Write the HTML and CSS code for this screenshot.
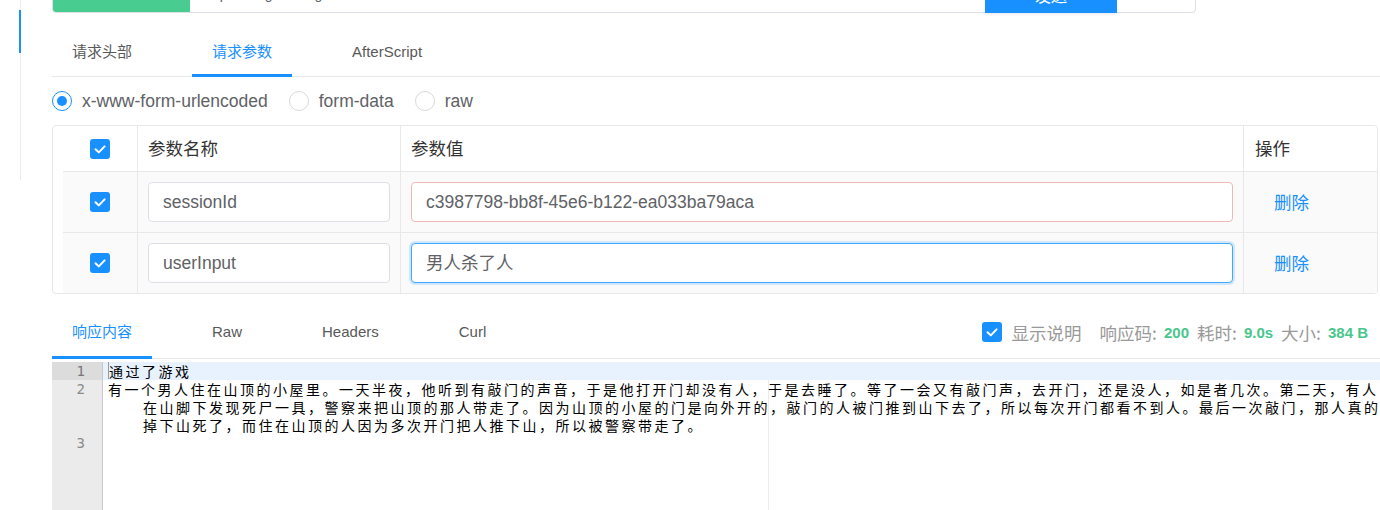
FILE: index.html
```html
<!DOCTYPE html>
<html lang="zh-CN">
<head>
<meta charset="utf-8">
<title>接口调试</title>
<link rel="stylesheet" href="styles.css">
</head>
<body>
<div class="page">
  <aside class="side">
    <div class="side-line"><div class="side-active"></div></div>
  </aside>
  <main class="main">
    <div class="urlbar">
      <div class="method"></div>
      <div class="url">/api/chat/game/log</div>
      <button class="send">发送</button>
      <div class="urlbar-rest"></div>
    </div>

    <div class="tabs req-tabs">
      <div class="tab">请求头部</div>
      <div class="tab active">请求参数</div>
      <div class="tab">AfterScript</div>
    </div>

    <div class="radios">
      <label class="radio checked"><span class="radio-dot"></span><span>x-www-form-urlencoded</span></label>
      <label class="radio"><span class="radio-dot"></span><span>form-data</span></label>
      <label class="radio"><span class="radio-dot"></span><span>raw</span></label>
    </div>

    <div class="params">
      <div class="prow phead">
        <div class="cell ccheck"><span class="cb"><svg viewBox="0 0 20 20" width="20" height="20"><path d="M5.5 10.2 L8.8 13.4 L14.6 7.4" fill="none" stroke="#fff" stroke-width="2" stroke-linecap="round" stroke-linejoin="round"/></svg></span></div>
        <div class="cell hcell">参数名称</div>
        <div class="cell hcell">参数值</div>
        <div class="cell hcell cop-h">操作</div>
      </div>
      <div class="prow pbody">
        <div class="cell ccheck"><span class="cb"><svg viewBox="0 0 20 20" width="20" height="20"><path d="M5.5 10.2 L8.8 13.4 L14.6 7.4" fill="none" stroke="#fff" stroke-width="2" stroke-linecap="round" stroke-linejoin="round"/></svg></span></div>
        <div class="cell"><div class="inp">sessionId</div></div>
        <div class="cell"><div class="inp inp-err">c3987798-bb8f-45e6-b122-ea033ba79aca</div></div>
        <div class="cell cop"><span class="link">删除</span></div>
      </div>
      <div class="prow pbody last">
        <div class="cell ccheck"><span class="cb"><svg viewBox="0 0 20 20" width="20" height="20"><path d="M5.5 10.2 L8.8 13.4 L14.6 7.4" fill="none" stroke="#fff" stroke-width="2" stroke-linecap="round" stroke-linejoin="round"/></svg></span></div>
        <div class="cell"><div class="inp">userInput</div></div>
        <div class="cell"><div class="inp inp-focus">男人杀了人</div></div>
        <div class="cell cop"><span class="link">删除</span></div>
      </div>
    </div>

    <div class="resp-head">
      <div class="tabs resp-tabs">
        <div class="tab active">响应内容</div>
        <div class="tab">Raw</div>
        <div class="tab">Headers</div>
        <div class="tab">Curl</div>
      </div>
      <div class="stats">
        <span class="cb"><svg viewBox="0 0 20 20" width="20" height="20"><path d="M5.5 10.2 L8.8 13.4 L14.6 7.4" fill="none" stroke="#fff" stroke-width="2" stroke-linecap="round" stroke-linejoin="round"/></svg></span>
        <span class="show-desc">显示说明</span>
        <span class="stat-label">响应码:</span><span class="stat-val">200</span>
        <span class="stat-label">耗时:</span><span class="stat-val">9.0s</span>
        <span class="stat-label">大小:</span><span class="stat-val">384 B</span>
      </div>
    </div>

    <div class="editor">
      <div class="gutter">
        <div class="gl active">1</div>
        <div class="gl">2</div>
        <div class="gl"></div>
        <div class="gl"></div>
        <div class="gl">3</div>
      </div>
      <div class="code">
        <div class="line active"><span class="cursor"></span>通过了游戏</div>
        <div class="line">有一个男人住在山顶的小屋里。一天半夜，他听到有敲门的声音，于是他打开门却没有人，于是去睡了。等了一会又有敲门声，去开门，还是没人，如是者几次。第二天，有人</div>
        <div class="line wrap">在山脚下发现死尸一具，警察来把山顶的那人带走了。因为山顶的小屋的门是向外开的，敲门的人被门推到山下去了，所以每次开门都看不到人。最后一次敲门，那人真的</div>
        <div class="line wrap">掉下山死了，而住在山顶的人因为多次开门把人推下山，所以被警察带走了。</div>
        <div class="line"></div>
      </div>
    </div>
  </main>
</div>
</body>
</html>
```

FILE: styles.css
```css
html, body {
  margin: 0;
  padding: 0;
  background: #fff;
}
body {
  width: 1380px;
  height: 510px;
  overflow: hidden;
  font-family: "Liberation Sans", "Noto Sans CJK SC", sans-serif;
}
.page {
  display: flex;
  align-items: flex-start;
}
.side {
  width: 52px;
  flex-shrink: 0;
  padding-left: 20px;
  box-sizing: border-box;
}
.side-line {
  width: 1px;
  height: 180px;
  background: #ececec;
}
.side-active {
  width: 2px;
  height: 43px;
  margin-left: -1px;
  position: relative;
  top: 10px;
  background: #1890ff;
}
.main {
  width: 1328px;
  flex-shrink: 0;
}

/* url bar */
.urlbar {
  margin-top: -24px;
  width: 1144px;
  height: 37px;
  box-sizing: border-box;
  border: 1px solid #dcdfe6;
  border-radius: 4px;
  display: flex;
}
.method {
  width: 137px;
  background: #49cc90;
  border-radius: 3px 0 0 3px;
}
.url {
  flex: 1;
  padding-left: 18px;
  font-size: 14px;
  line-height: 35px;
  color: #606266;
}
.send {
  width: 132px;
  height: 36px;
  margin-bottom: -1px;
  border: none;
  background: #1890ff;
  color: #fff;
  font-family: "Noto Sans CJK SC", sans-serif;
  font-size: 16px;
  line-height: 35px;
  padding: 0;
  box-shadow: 0 2px 2px rgba(0, 0, 0, 0.06);
}
.urlbar-rest {
  width: 78px;
}

/* tabs */
.tabs {
  display: flex;
}
.req-tabs {
  margin-top: 15px;
  height: 48px;
  border-bottom: 1px solid #e8e8e8;
}
.tab {
  padding: 0 20px;
  margin-right: 40px;
  height: 49px;
  margin-bottom: -1px;
  box-sizing: border-box;
  border-bottom: 3px solid transparent;
  line-height: 48px;
  font-size: 15px;
  color: #595959;
  white-space: nowrap;
}
.tab.active {
  color: #1890ff;
  border-bottom-color: #1890ff;
}

/* radios */
.radios {
  height: 48px;
  display: flex;
  align-items: center;
}
.radio {
  display: flex;
  align-items: center;
  gap: 10px;
  margin-right: 21px;
  font-size: 17.5px;
  color: #606266;
}
.radio-dot {
  width: 20px;
  height: 20px;
  box-sizing: border-box;
  border: 1px solid #d9d9d9;
  border-radius: 50%;
  display: flex;
  align-items: center;
  justify-content: center;
  background: #fff;
}
.radio.checked .radio-dot {
  border-color: #1890ff;
}
.radio.checked .radio-dot::after {
  content: "";
  width: 10px;
  height: 10px;
  border-radius: 50%;
  background: #1890ff;
}

/* params table */
.params {
  width: 1326px;
  box-sizing: border-box;
  border: 1px solid #e8e8e8;
  border-radius: 4px;
  padding-left: 10px;
  overflow: hidden;
}
.prow {
  display: grid;
  grid-template-columns: 74px 263px 843px 1fr;
  border-bottom: 1px solid #e8e8e8;
}
.phead {
  height: 46px;
  box-sizing: border-box;
  background: #fff;
}
.pbody {
  height: 61px;
  box-sizing: border-box;
  background: #fafafa;
}
.pbody.last {
  height: 60px;
  border-bottom: none;
}
.cell {
  display: flex;
  align-items: center;
  padding: 0 10px;
  box-sizing: border-box;
  border-left: 1px solid #e8e8e8;
  font-size: 17.5px;
  color: #333;
  font-family: "Noto Sans CJK SC", sans-serif;
}
.hcell {
  padding-bottom: 3px;
}
.cell.ccheck {
  border-left: none;
  justify-content: center;
  padding: 0;
}
.cop-h {
  padding-left: 11px;
}
.cop {
  padding-left: 30px;
  padding-bottom: 2px;
}
.cb {
  display: inline-flex;
  width: 20px;
  height: 20px;
  border-radius: 3px;
  background: #1890ff;
  flex-shrink: 0;
}
.inp {
  width: 100%;
  height: 40px;
  box-sizing: border-box;
  border: 1px solid #dcdfe6;
  border-radius: 4px;
  background: #fff;
  padding-left: 14px;
  font-family: "Liberation Sans", "Noto Sans CJK SC", sans-serif;
  font-size: 17.5px;
  line-height: 38px;
  color: #606266;
  white-space: nowrap;
  overflow: hidden;
}
.inp-err {
  border-color: #f0b9b9;
}
.inp-focus {
  border-color: #40a9ff;
  box-shadow: 0 0 0 2px rgba(24, 144, 255, 0.18);
}
.link {
  color: #1890ff;
  font-size: 17.5px;
}

/* response header */
.resp-head {
  margin-top: 14px;
  height: 50px;
  display: flex;
  border-bottom: 1px solid #e8e8e8;
}
.resp-tabs .tab {
  height: 51px;
  line-height: 48px;
}
.stats {
  margin-left: auto;
  padding-right: 12px;
  display: flex;
  align-items: center;
  height: 48px;
  font-family: "Noto Sans CJK SC", sans-serif;
}
.show-desc {
  margin-left: 10px;
  margin-right: 18px;
  font-size: 17.5px;
  color: #999;
}
.stat-label {
  font-size: 17.5px;
  color: #999;
  margin-right: 7px;
}
.stat-val {
  font-family: "Liberation Sans", sans-serif;
  font-weight: bold;
  font-size: 15px;
  color: #48c68c;
  margin-right: 8px;
}
.stat-val:last-child {
  margin-right: 0;
}

/* editor */
.editor {
  margin-top: 3px;
  height: 150px;
  display: flex;
}
.gutter {
  width: 51px;
  flex-shrink: 0;
  box-sizing: border-box;
  background: #ebebeb;
  border-right: 1px solid #c9c9c9;
  font-family: "DejaVu Sans Mono", monospace;
  font-size: 14px;
  color: #8a8a8a;
}
.gl {
  height: 18px;
  line-height: 18px;
  text-align: right;
  padding-right: 17px;
}
.gl.active {
  background: #dcdcdc;
  color: #777;
}
.code {
  flex: 1;
  overflow: hidden;
  background: linear-gradient(to right, transparent 665px, #ececec 665px, #ececec 666px, transparent 666px);
}
.line {
  height: 18px;
  line-height: 18px;
  padding-left: 5px;
  white-space: nowrap;
  overflow: hidden;
  font-family: "Noto Sans CJK SC", sans-serif;
  font-size: 14px;
  letter-spacing: 2.5px;
  color: #000;
}
.line.active {
  background: #e8f2fe;
}
.line.wrap {
  padding-left: 40px;
}
.cursor {
  display: inline-block;
  width: 1px;
  height: 17px;
  vertical-align: top;
  background: #9a9a9a;
  margin-right: 0;
  letter-spacing: 0;
}
```
